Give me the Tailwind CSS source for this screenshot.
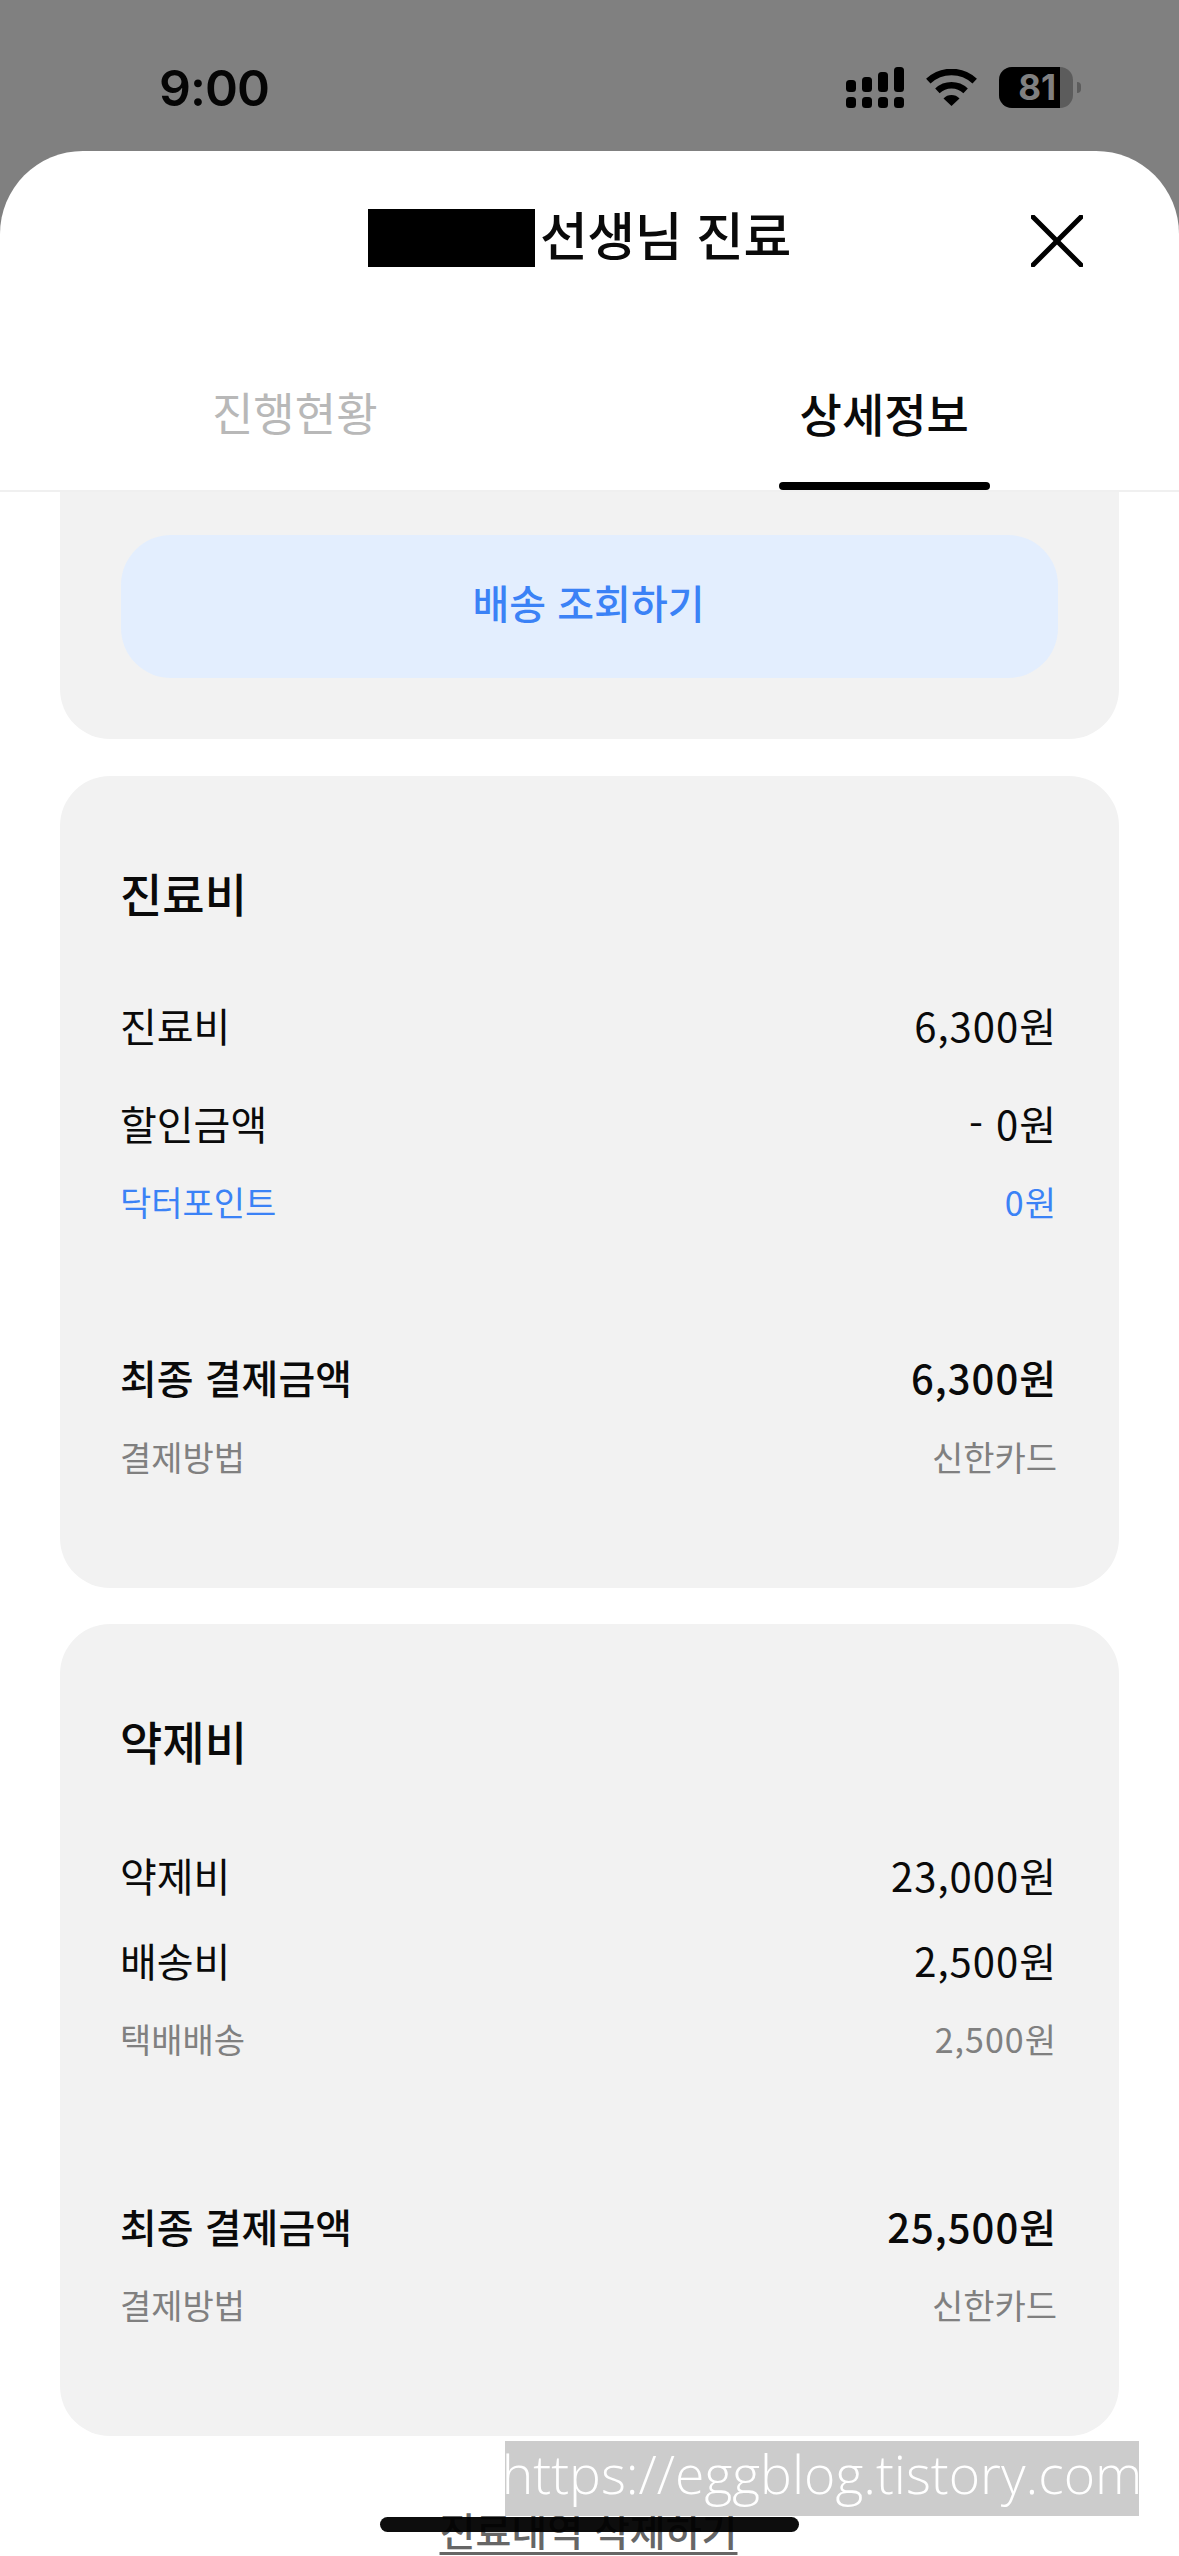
<!DOCTYPE html>
<html lang="ko">
<head>
    <meta charset="UTF-8">
    <meta name="viewport" content="width=device-width, initial-scale=1.0">
    <title>선생님 진료</title>
    <script src="https://cdn.jsdelivr.net/npm/@tailwindcss/browser@4"></script>
</head>
<body class="bg-[#808080] font-['Noto_Sans_CJK_KR',sans-serif]">
    <div class="relative w-[1179px] h-[2556px] overflow-hidden flex flex-col">
        <!-- status bar -->
        <div class="h-[151px] shrink-0 flex items-start justify-between pl-[159px] pr-[98px] pt-[67px]">
            <span class="font-['Inter',sans-serif] font-semibold text-[50px] leading-[42px] text-[#050505] tracking-[-1px]">9:00</span>
            <div class="flex items-center gap-[22px] h-[41px]">
                <svg width="58" height="41" viewBox="0 0 58 41" fill="#000">
                    <rect x="0" y="13" width="10" height="12" rx="3.5"/>
                    <rect x="16" y="10" width="10" height="15" rx="3.5"/>
                    <rect x="32" y="5" width="10" height="20" rx="3.5"/>
                    <rect x="48" y="0" width="10" height="25" rx="3.5"/>
                    <rect x="0" y="30" width="10" height="11" rx="3.5"/>
                    <rect x="16" y="30" width="10" height="11" rx="3.5"/>
                    <rect x="32" y="30" width="10" height="11" rx="3.5"/>
                    <rect x="48" y="30" width="10" height="11" rx="3.5"/>
                </svg>
                <svg width="51" height="37" viewBox="0 0 51 37">
                    <path d="M2.3 12.1A34 34 0 0 1 48.7 12.1" fill="none" stroke="#000" stroke-width="6.5"/>
                    <path d="M11.4 21.9A20.7 20.7 0 0 1 39.6 21.9" fill="none" stroke="#000" stroke-width="6.5"/>
                    <path d="M25.5 37L17.5 29.5A11 11 0 0 1 33.5 29.5Z" fill="#000"/>
                </svg>
                <div class="flex items-center gap-[4px]">
                    <div class="w-[74px] h-[41px] rounded-[13px] overflow-hidden flex bg-[#5c5c5c]">
                        <div class="w-[61px] h-full bg-black flex items-center justify-end pr-[4px]">
                            <span class="font-['Inter',sans-serif] font-bold text-[35px] leading-none text-[#808080]">81</span>
                        </div>
                    </div>
                    <div class="w-[4px] h-[11px] rounded-r-full bg-[#5c5c5c]"></div>
                </div>
            </div>
        </div>

        <!-- bottom sheet -->
        <div class="flex-1 bg-white rounded-t-[83px] overflow-hidden flex flex-col">
            <div class="h-[116px] shrink-0 flex items-start pl-[368px] pr-[96px] pt-[58px]">
                <div class="w-[167px] h-[58px] bg-black"></div>
                <span class="ml-[5px] -mt-[3px] text-[52px] leading-[56px] font-medium text-[#0a0a0a] tracking-[-0.5px]">선생님 진료</span>
                <svg class="ml-auto mt-[6px]" width="52" height="52" viewBox="0 0 52 52" fill="none" stroke="#000" stroke-width="5" stroke-linecap="round">
                    <path d="M2 2L50 50M50 2L2 50"/>
                </svg>
            </div>

            <div class="flex h-[225px] shrink-0 border-b-[2px] border-[#f0f0f0]">
                <div class="flex-1 flex flex-col items-center pt-[115px]">
                    <span class="h-[60px] text-[45px] leading-[60px] text-[#b8b8b8]">진행현황</span>
                </div>
                <div class="flex-1 flex flex-col items-center pt-[115px]">
                    <span class="h-[60px] text-[46px] leading-[60px] font-medium text-[#0a0a0a]">상세정보</span>
                    <div class="mt-[40px] w-[211px] h-[8px] rounded-full bg-black"></div>
                </div>
            </div>

            <div class="flex-1 overflow-hidden pl-[60px] pr-[60px]">
                <!-- delivery card, scrolled under the tabs -->
                <div class="bg-[#f2f2f2] rounded-b-[50px] pt-[43px] px-[61px] pb-[61px]">
                    <div class="h-[143px] rounded-[50px] bg-[#e3eefe] flex items-center justify-center pb-[10px] pr-[2px]">
                        <span class="text-[40px] font-medium text-[#3b82f6]">배송 조회하기</span>
                    </div>
                </div>

                <!-- 진료비 -->
                <div class="mt-[37px] bg-[#f2f2f2] rounded-[50px] pl-[60px] pr-[62px] pt-[95px] pb-[106px]">
                    <h2 class="h-[48px] text-[46px] leading-[42px] font-medium text-[#0a0a0a]">진료비</h2>
                    <div class="mt-[84px] h-[48px] pb-[5px] flex items-center justify-between text-[40px] text-[#0a0a0a]"><span>진료비</span><span class="tracking-[1px]">6,300원</span></div>
                    <div class="mt-[50px] h-[48px] pb-[5px] flex items-center justify-between text-[40px] text-[#0a0a0a]"><span>할인금액</span><span class="tracking-[1px]">- 0원</span></div>
                    <div class="mt-[30px] h-[48px] pb-[4px] flex items-center justify-between text-[34px] text-[#3b82f6]"><span>닥터포인트</span><span class="tracking-[1px]">0원</span></div>
                    <div class="mt-[128px] h-[48px] pb-[5px] flex items-center justify-between text-[40px] font-medium text-[#0a0a0a]"><span>최종 결제금액</span><span class="tracking-[1px]">6,300원</span></div>
                    <div class="mt-[31px] h-[48px] pb-[4px] flex items-center justify-between text-[34px] text-[#808080]"><span>결제방법</span><span>신한카드</span></div>
                </div>

                <!-- 약제비 -->
                <div class="mt-[36px] bg-[#f2f2f2] rounded-[50px] pl-[60px] pr-[62px] pt-[95px] pb-[106px]">
                    <h2 class="h-[48px] text-[46px] leading-[42px] font-medium text-[#0a0a0a]">약제비</h2>
                    <div class="mt-[86px] h-[48px] pb-[5px] flex items-center justify-between text-[40px] text-[#0a0a0a]"><span>약제비</span><span class="tracking-[1px]">23,000원</span></div>
                    <div class="mt-[37px] h-[48px] pb-[5px] flex items-center justify-between text-[40px] text-[#0a0a0a]"><span>배송비</span><span class="tracking-[1px]">2,500원</span></div>
                    <div class="mt-[30px] h-[48px] pb-[4px] flex items-center justify-between text-[34px] text-[#808080]"><span>택배배송</span><span class="tracking-[1px]">2,500원</span></div>
                    <div class="mt-[140px] h-[48px] pb-[5px] flex items-center justify-between text-[40px] font-medium text-[#0a0a0a]"><span>최종 결제금액</span><span class="tracking-[1px]">25,500원</span></div>
                    <div class="mt-[30px] h-[48px] pb-[4px] flex items-center justify-between text-[34px] text-[#808080]"><span>결제방법</span><span>신한카드</span></div>
                </div>

                <div class="mt-[68px] text-center pr-[2px]">
                    <span class="text-[39px] leading-[50px] font-medium text-[#666666] underline underline-offset-[6px]">진료내역 삭제하기</span>
                </div>
            </div>
        </div>

        <!-- watermark and home indicator sit over the page -->
        <div class="absolute left-[505px] top-[2441px] w-[634px] h-[75px] bg-[#cccccc] flex items-center justify-center pb-[9px]">
            <span class="font-['Open_Sans',sans-serif] font-light text-[53.5px] leading-none text-white whitespace-nowrap">https://eggblog.tistory.com</span>
        </div>
        <div class="absolute left-[380px] top-[2517px] w-[419px] h-[15px] rounded-full bg-black/95"></div>
    </div>
</body>
</html>
